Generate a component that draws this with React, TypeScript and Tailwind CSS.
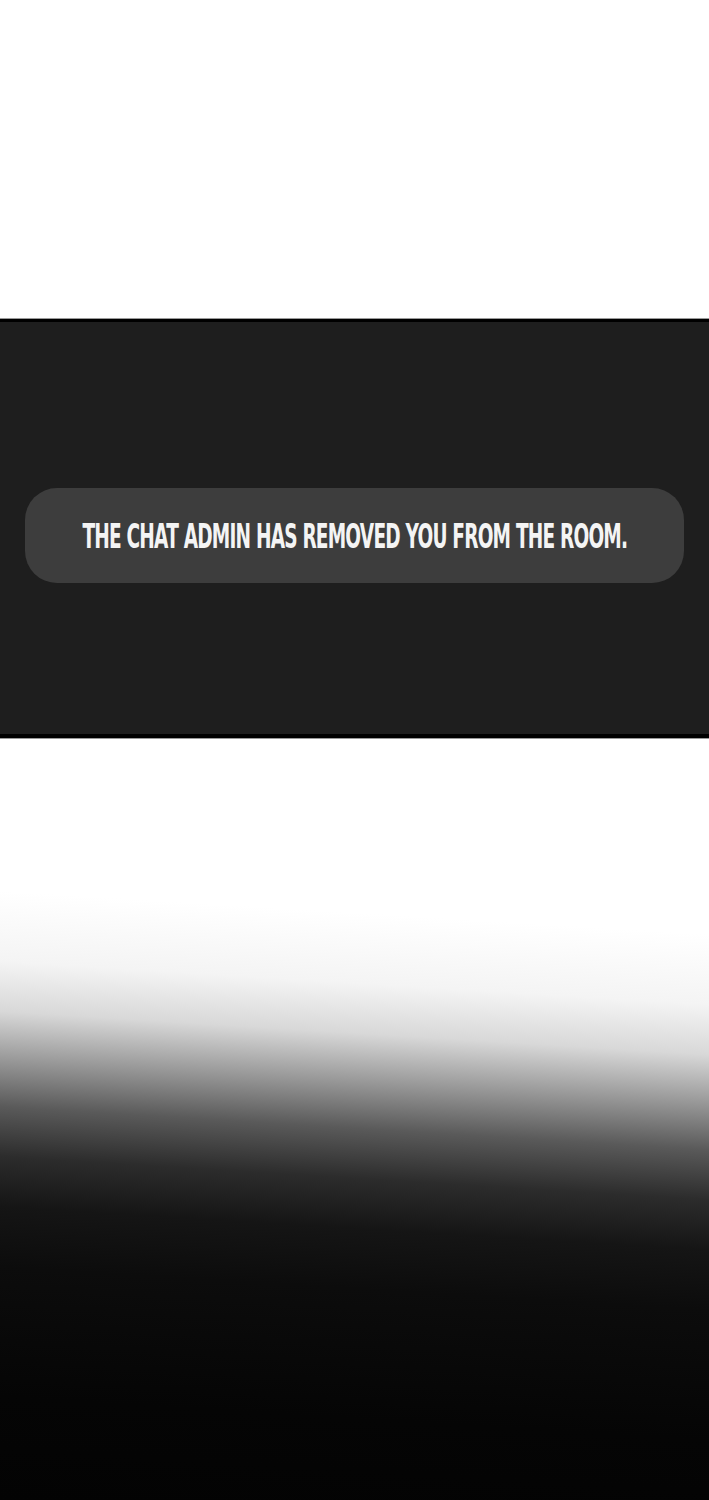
export default function App() {
  return (
    <div className="w-[709px] h-[1500px] bg-white flex flex-col">
      <div className="h-[318px] bg-white" />
      <div className="h-px bg-[#9a9a9a]" />
      <div className="h-[419px] bg-[#1e1e1e] border-t-[3px] border-b-[4px] border-black flex flex-col px-[25px] pt-[166px]">
        <div className="h-[95px] rounded-[32px] bg-[#3d3d3d] flex items-center justify-center">
          <span
            className="inline-block shrink-0 text-[#f4f4f4] text-[34px] leading-none font-bold tracking-[-1.5px] [transform:scaleX(0.546)] whitespace-nowrap uppercase"
            style={{ fontFamily: '"DejaVu Sans", sans-serif' }}
          >
            THE CHAT ADMIN HAS REMOVED YOU FROM THE ROOM.
          </span>
        </div>
      </div>
      <div className="h-px bg-[#9a9a9a]" />
      <div className="flex-1 bg-[linear-gradient(183.5deg,#ffffff_0px,#ffffff_195px,#f4f4f4_265px,#d8d8d8_315px,#9a9a9a_362px,#5a5a5a_410px,#2c2c2c_460px,#151515_510px,#0c0c0c_570px,#050505_700px,#030303_100%)]" />
    </div>
  );
}
